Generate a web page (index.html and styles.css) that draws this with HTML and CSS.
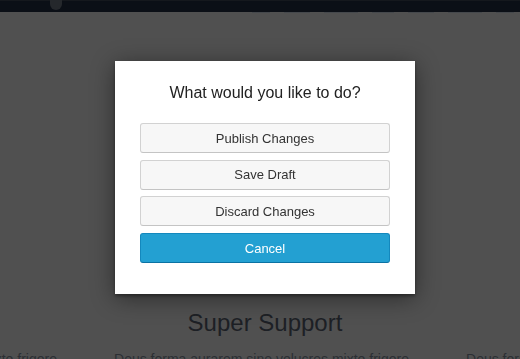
FILE: index.html
```html
<!DOCTYPE html>
<html>
<head>
<meta charset="utf-8">
<link rel="stylesheet" href="styles.css">
</head>
<body>
<header class="topbar">
  <span class="logo"></span>
</header>
<div class="nav-ghost"><span class="g w1"></span><span class="g w2"></span><span class="g w3"></span><span class="g w4"></span><span class="g w2"></span><span class="g w3"></span><span class="g w1"></span></div>
<main class="page">
  <h2 class="section-title">Super Support</h2>
  <div class="cols">
    <p class="col">Deus forma aurarem sine volucres mixto frigore</p>
    <p class="col">Deus forma aurarem sine volucres mixto frigore</p>
    <p class="col">Deus forma aurarem sine volucres mixto frigore</p>
  </div>
</main>
<div class="overlay">
  <div class="dialog">
    <h1 class="dialog-title">What would you like to do?</h1>
    <div class="actions">
      <button class="btn">Publish Changes</button>
      <button class="btn">Save Draft</button>
      <button class="btn">Discard Changes</button>
      <button class="btn btn-primary">Cancel</button>
    </div>
  </div>
</div>
</body>
</html>
```
FILE: styles.css
```css
* { box-sizing: border-box; }
html, body { margin: 0; padding: 0; }
body {
  background: #505050;
  font-family: "Liberation Sans", Arial, Helvetica, sans-serif;
  overflow: hidden;
  height: 359px;
}
.topbar {
  height: 12px;
  background: #0b0f16;
  border-top: 1px solid #15181d;
  position: relative;
}
.logo {
  position: absolute;
  left: 50px;
  top: -1px;
  width: 12px;
  height: 10px;
  border-radius: 0 0 6px 6px;
  background: #25282c;
}
.nav-ghost {
  display: flex;
  justify-content: flex-end;
  gap: 14px;
  height: 2px;
  padding: 0 6px 0 0;
  margin-top: -1px;
}
.g {
  display: block;
  height: 2px;
  background: #45484c;
}
.w1 { width: 18px; }
.w2 { width: 26px; }
.w3 { width: 34px; }
.w4 { width: 22px; }
.page {
  padding: 296px 0 0 10px;
}
.section-title {
  margin: 0;
  text-align: center;
  font-weight: normal;
  font-size: 24px;
  line-height: 28px;
  color: #1d2025;
}
.cols {
  display: flex;
  justify-content: center;
  gap: 32px;
  margin: 12px 0 0 -7px;
}
.col {
  flex: 0 0 320px;
  margin: 0;
  text-align: center;
  white-space: nowrap;
  font-size: 14px;
  line-height: 20px;
  color: #2c2f34;
}
.overlay {
  position: fixed;
  inset: 0;
  display: flex;
  justify-content: center;
  align-items: flex-start;
  padding: 61px 0 0 10px;
}
.dialog {
  width: 300px;
  background: #fff;
  padding: 22px 25px 31px;
  box-shadow: 0 2px 3px rgba(0,0,0,0.35), 0 4px 22px rgba(0,0,0,0.45);
}
.dialog-title {
  margin: 0 0 20px;
  font-size: 16px;
  line-height: 20px;
  font-weight: normal;
  text-align: center;
  color: #222;
}
.actions {
  display: flex;
  flex-direction: column;
  gap: 6.7px;
}
.btn {
  display: block;
  width: 100%;
  height: 30px;
  padding: 0;
  font-family: inherit;
  font-size: 13px;
  color: #333;
  background: #f7f7f7;
  border: 1px solid #d2d2d2;
  border-bottom-color: #c4c4c4;
  border-radius: 3px;
  cursor: pointer;
}
.btn-primary {
  background: #23a0d2;
  border-color: #1488bd;
  border-bottom-color: #0b72a3;
  color: #fff;
}
```
